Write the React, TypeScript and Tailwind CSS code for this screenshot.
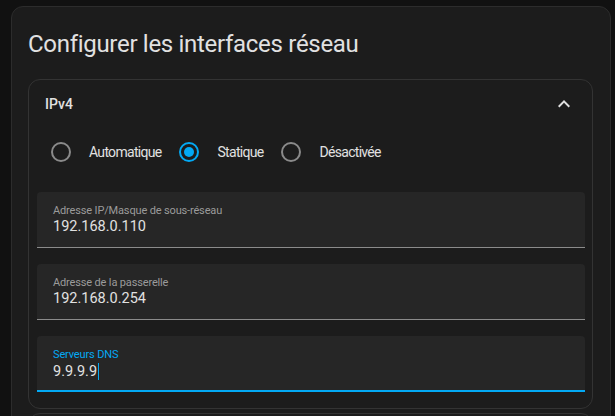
import React from "react";

const font = { fontFamily: "Roboto, 'Noto Sans', sans-serif" };

function Radio({ checked, label }: { checked?: boolean; label: string }) {
  return (
    <div className="flex items-center">
      <div className="flex h-10 w-10 items-center justify-center">
        {checked ? (
          <div className="flex h-5 w-5 items-center justify-center rounded-full border-2 border-[#03a9f4]">
            <div className="h-[10px] w-[10px] rounded-full bg-[#03a9f4]" />
          </div>
        ) : (
          <div className="h-5 w-5 rounded-full border-2 border-[#8a8a8a]" />
        )}
      </div>
      <span className="pl-2 pr-2 text-[14px] leading-5 tracking-[-0.7px] text-[#e1e1e1]">{label}</span>
    </div>
  );
}

function Field({ label, value, focused }: { label: string; value: string; focused?: boolean }) {
  return (
    <div
      className={
        focused
          ? "h-14 rounded-t-[4px] border-b-2 border-[#03a9f4] bg-[#262626] px-4 pt-[11px]"
          : "h-14 rounded-t-[4px] border-b border-[#8b8b8b] bg-[#262626] px-4 pt-[11px]"
      }
    >
      <div
        className={
          focused
            ? "text-[11px] leading-4 tracking-[-0.15px] text-[#03a9f4]"
            : "text-[11px] leading-4 tracking-[-0.15px] text-[#9b9b9b]"
        }
      >
        {label}
      </div>
      <div className="flex items-center text-[14.5px] leading-4 text-[#e1e1e1]">
        <span>{value}</span>
        {focused && <span className="ml-px inline-block h-[17px] w-px bg-[#03a9f4]" />}
      </div>
    </div>
  );
}

export default function App() {
  return (
    <div className="h-[416px] overflow-hidden bg-[#111111] pl-[11px] pt-[6px]" style={font}>
      <div className="w-[600px] rounded-xl border border-[#2c2c2c] bg-[#1c1c1c] pl-4 pr-[17px] pt-[21px]">
        <h1 className="text-[24px] font-normal leading-8 tracking-[-0.3px] text-[#e1e1e1]">
          Configurer les interfaces réseau
        </h1>
        <div className="mt-[19px] rounded-xl border border-[#333333] bg-[#1c1c1c]">
          <div className="flex h-12 items-center justify-between pl-4 pr-4">
            <span className="text-[14px] font-medium text-[#e1e1e1]">IPv4</span>
            <svg width="24" height="24" viewBox="0 0 24 24" className="fill-[#e1e1e1]">
              <path d="M7.41,15.41L12,10.83L16.59,15.41L18,14L12,8L6,14L7.41,15.41Z" />
            </svg>
          </div>
          <div className="flex h-12 items-center pl-3">
            <Radio label="Automatique" />
            <Radio checked label="Statique" />
            <Radio label="Désactivée" />
          </div>
          <div className="flex flex-col gap-4 pb-4 pl-2 pr-[7px] pt-4">
            <Field label="Adresse IP/Masque de sous-réseau" value="192.168.0.110" />
            <Field label="Adresse de la passerelle" value="192.168.0.254" />
            <Field label="Serveurs DNS" value="9.9.9.9" focused />
          </div>
        </div>
        <div className="mt-1 h-10 rounded-xl border border-[#333333] bg-[#1c1c1c]" />
      </div>
    </div>
  );
}
